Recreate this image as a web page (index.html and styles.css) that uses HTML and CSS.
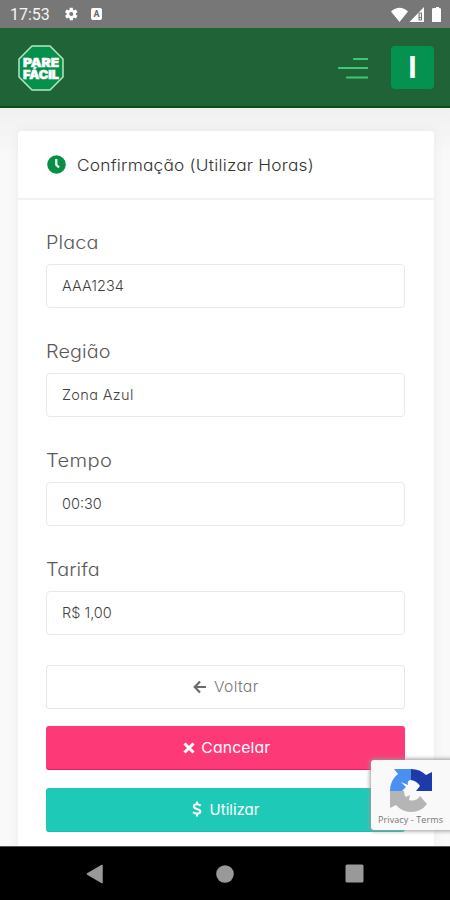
FILE: index.html
```html
<!DOCTYPE html>
<html lang="pt-BR">
<head>
<meta charset="utf-8">
<meta name="viewport" content="width=device-width, initial-scale=1">
<title>Pare Fácil</title>
<link rel="stylesheet" href="styles.css">
</head>
<body>
<div class="screen">
  <div class="status">
    <span class="time">17:53</span>
    <svg class="gear" width="16" height="16" viewBox="0 0 24 24"><path fill="#fff" fill-rule="evenodd" d="M19.4 13a7.500 7.500 0 0 0 0-2l2.300-1.800-2.200-3.800-2.700 1.100a8 8 0 0 0-1.700-1L14.700 2.500h-4.500l-.4 3a8 8 0 0 0-1.700 1L5.300 5.400 3.100 9.200 5.400 11a7.500 7.500 0 0 0 0 2l-2.300 1.800 2.200 3.800 2.800-1.100a8 8 0 0 0 1.700 1l.4 3h4.500l.4-3a8 8 0 0 0 1.700-1l2.700 1.100 2.200-3.800zM12.400 9a3 3 0 1 1 0 6 3 3 0 0 1 0-6z"/></svg>
    <span class="abox">A</span>
    <svg class="signals" width="54" height="18" viewBox="0 0 54 18"><path fill="#fff" d="M3 5.500Q11.500-2 20 5.500L11.500 16zM36 1v15H21.500zM46 2h2V1h3v1q2 0 2 1v13H44V3q0-1 2-1z"/><path fill="#777" d="M30.500 6.500h3.500V14.500h-3.500z"/><path fill="#fff" d="M31.700 7.500h1.200v3.500h-1.200zM31.700 12h1.200V13.500h-1.200z"/></svg>
  </div>
  <header class="topbar">
    <svg class="logo" width="46" height="46" viewBox="0 0 46 46"><path d="M14 1h18l13 13v18L32 45H14L1 32V14z" fill="#05914c" stroke="#b5e8bd" stroke-width="1.500"/><text class="logotext" x="5" y="21.800" textLength="36" lengthAdjust="spacingAndGlyphs">PARE</text><text class="logotext" x="5" y="34" textLength="36" lengthAdjust="spacingAndGlyphs">FÁCIL</text></svg>
    <svg class="burger" width="30" height="24" viewBox="0 0 30 24"><path d="M16 3H29.500M1 12H29.500M9 21.500H29.500" stroke="#3fc873" stroke-width="2.200" stroke-linecap="round"/></svg>
    <div class="avatar">I</div>
  </header>
  <main class="content">
    <section class="card">
      <div class="card-head">
        <svg width="19" height="19" viewBox="0 0 19 19"><circle cx="9.500" cy="9.500" r="9.300" fill="#078f46"/><path d="M9.300 4V9.800L12 12.500" fill="none" stroke="#fff" stroke-width="2.200"/></svg>
        <h1>Confirmação (Utilizar Horas)</h1>
      </div>
      <form class="form">
        <div class="field"><label>Placa</label><div class="input">AAA1234</div></div>
        <div class="field"><label>Região</label><div class="input region">Zona Azul</div></div>
        <div class="field"><label class="wide">Tempo</label><div class="input">00:30</div></div>
        <div class="field"><label>Tarifa</label><div class="input">R$ 1,00</div></div>
        <div class="buttons">
          <div class="btn back"><svg width="14" height="14" viewBox="0 0 14 14"><path d="M7 1.500L1.700 7 7 12.500M2 7H13" fill="none" stroke="#6c6c6c" stroke-width="2.200"/></svg><span>Voltar</span></div>
          <div class="btn cancel"><svg width="12" height="12" viewBox="0 0 12 12"><path d="M1.500 1.500L10.500 10.500M10.500 1.500L1.500 10.500" stroke="#fff" stroke-width="3"/></svg><span>Cancelar</span></div>
          <div class="btn use"><svg width="10" height="16" viewBox="0 0 10 16"><path d="M8.700 4.600Q7 3.300 5 3.300 1.800 3.300 1.800 5.400 1.800 7 5 7.900 8.300 8.800 8.300 10.600 8.300 12.700 5 12.700 2.800 12.700 1.100 11.300M5 .5V3.500M5 12.500V15.500" fill="none" stroke="#fff" stroke-width="2.100"/></svg><span>Utilizar</span></div>
        </div>
      </form>
    </section>
  </main>
  <nav class="navbar">
    <svg width="18" height="20" viewBox="0 0 18 20"><path d="M1.500 10L16 1.500V18.500z" fill="#999" stroke="#999" stroke-width="1.500" stroke-linejoin="round"/></svg>
    <svg width="18" height="18" viewBox="0 0 18 18"><circle cx="9" cy="9" r="8.800" fill="#999"/></svg>
    <svg width="19" height="19" viewBox="0 0 19 19"><rect x=".5" y=".5" width="18" height="18" rx="1.500" fill="#999"/></svg>
  </nav>
  <aside class="captcha">
    <svg width="44" height="45" viewBox="0 0 44 45"><path fill="#4a90f0" d="M22 1H5l4 5Q1 12 1 23H13L17 19 12 14 19 17Q18 12 22 12z"/><path fill="#1c3aa9" d="M22 1Q31 1 37 7L43 4V23H27L31 18Q28 13 22 12z"/><path fill="#b5b5b5" d="M1 23H15Q15 27 17 29L21 27 20 32Q27 34 31 28L38 36Q32 44 22 44 13 44 7 37L1 40z"/></svg>
    <div class="legal">Privacy - Terms</div>
  </aside>
</div>
</body>
</html>
```
FILE: styles.css
```css
* { box-sizing: border-box; }
body { margin: 0; font-family: Inter, "Open Sans", sans-serif; font-feature-settings: "cv11"; }
svg { display: block; flex: none; }
.screen { position: relative; width: 450px; height: 900px; display: flex; flex-direction: column; overflow: hidden; }
.status { height: 28px; flex: none; background: #777; display: flex; align-items: center; padding: 0 8px 0 10px; }
.time { font: 16px/28px Roboto, sans-serif; color: #f4f4f4; width: 53px; padding-top: 2px; }
.abox { width: 11px; height: 12px; margin-left: 12px; background: #fff; border-radius: 2px; color: #666; font: bold 9px/12px Roboto, sans-serif; text-align: center; }
.signals { margin-left: auto; margin-top: 1px; }
.topbar { height: 80px; flex: none; background: #1f6336; border-bottom: 2px solid #07500f; display: flex; align-items: center; padding: 1px 16px 0 18px; }
.logotext { font: 900 12px Inter, sans-serif; fill: #fff; stroke: #fff; stroke-width: .5px; }
.burger { margin-left: auto; margin-right: 23px; }
.avatar { width: 43px; height: 43px; border-radius: 4px; background: #05914f; color: #fff; font: 700 30px/43px Inter, sans-serif; text-align: center; }
.content { flex: 1; min-height: 0; background: linear-gradient(#f0f0f0, #f4f4f4 20px, #f9f9fa 50px); padding: 23px 16px 0 18px; overflow: hidden; }
.card { background: #fff; height: 760px; border-radius: 4px; box-shadow: 0 0 12px rgba(60, 60, 80, .07); }
.card-head { height: 69px; border-bottom: 2px solid #f2f2f3; display: flex; align-items: center; gap: 11px; padding-left: 29px; }
h1 { margin: 0; font-size: 16px; font-weight: 350; line-height: 24px; letter-spacing: .2px; color: #333; white-space: nowrap; transform: scaleX(1.080); transform-origin: left; }
.form { padding: 28px 29px 0 28px; }
.field { height: 109px; }
label { display: block; height: 36px; font-size: 18px; line-height: 29px; font-weight: 300; letter-spacing: .1px; color: #595959; transform: scaleX(1.100); transform-origin: left; }
label.wide { letter-spacing: .3px; transform: scaleX(1.120); }
.input { height: 44px; border: 1.500px solid #e9e9eb; border-radius: 4px; padding-left: 15px; font-size: 14.500px; line-height: 41px; font-weight: 300; color: #3f3f3f; }
.region { letter-spacing: .35px; }
.buttons { display: flex; flex-direction: column; gap: 17.500px; padding-top: .8px; }
.btn { height: 44px; border-radius: 3px; display: flex; align-items: center; justify-content: center; gap: 8px; font-size: 15px; color: #fff; }
.back { border: 1.500px solid #e6e6e8; color: #777; font-weight: 350; letter-spacing: .3px; }
.back span, .cancel span { transform: scaleX(1.050); }
.cancel { background: #fd3978; border-bottom: 1px solid #f5166c; letter-spacing: .1px; }
.use { background: #1fc9b7; border-bottom: 1px solid #18bfac; }
.navbar { height: 54px; flex: none; background: #000; border-top: 1px solid #555; display: flex; justify-content: space-between; align-items: center; padding: 0 86px; }
.captcha { position: absolute; left: 371px; top: 760px; width: 84px; height: 70px; background: #f9f9f9; border-radius: 3px; box-shadow: 0 0 4px 1px #999; padding: 8px 0 0 18px; }
.legal { margin: 2px 0 0 -11px; font: 9px/10px "Open Sans", sans-serif; letter-spacing: .1px; color: #777; white-space: nowrap; }
```
